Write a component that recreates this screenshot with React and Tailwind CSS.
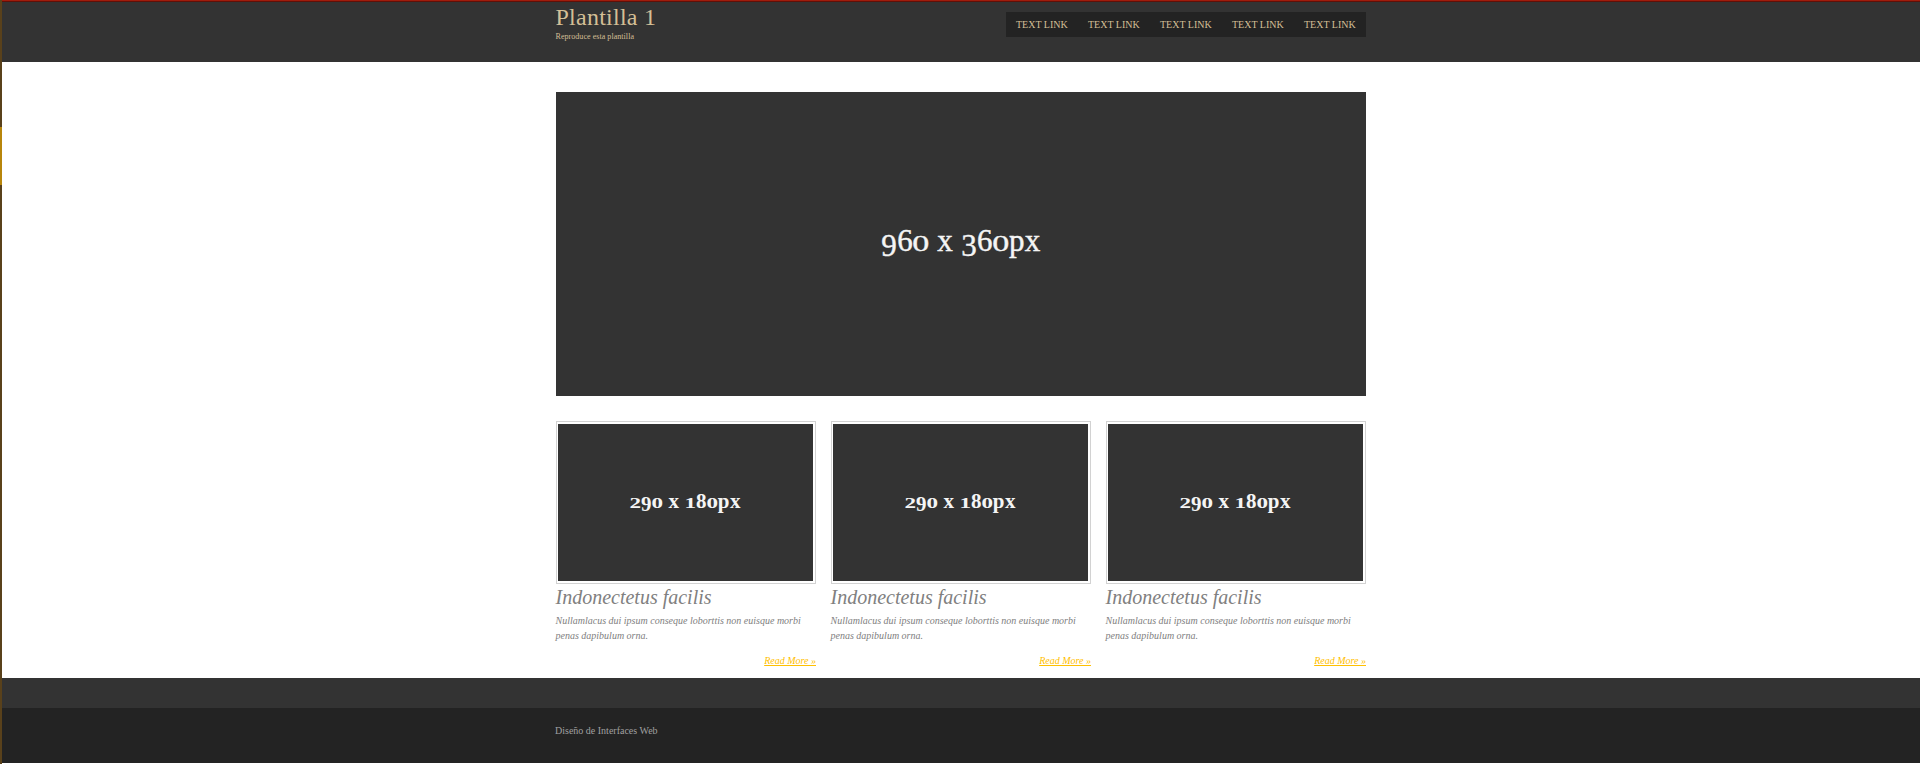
const cards = [1, 2, 3];
const links = [1, 2, 3, 4, 5];

// Old-style figures: short ones sit at x-height, low ones hang under the baseline.
function Figures({ text }) {
  return [...text].map((c, i) => {
    if ("012".includes(c)) {
      return <span key={i} className="inline-block origin-[50%_84%] scale-x-[1.1] scale-y-[0.73]">{c}</span>;
    }
    if ("39".includes(c)) {
      return <span key={i} className="align-[-0.15em] leading-[0]">{c}</span>;
    }
    return c;
  });
}

function Card() {
  return (
    <article className="w-[260px] whitespace-nowrap font-['Liberation_Serif',serif] italic text-[#808080]">
      <div className="h-[163px] border border-[#d2d2d2] pt-[2px] pl-px">
        <div className="flex h-[157px] w-[255px] items-center justify-center bg-[#333333] pb-[3px] text-[21px] leading-none font-bold tracking-[0.4px] not-italic text-[#f5f5f5]">
          <div className="whitespace-pre"><Figures text="290 x 180px" /></div>
        </div>
      </div>
      <h2 className="-ml-[0.5px] h-[29px] text-[20px] leading-[26px]">Indonectetus facilis</h2>
      <p className="-ml-[0.5px] h-[43px] text-[10px] leading-[15px]">
        Nullamlacus dui ipsum conseque loborttis non euisque morbi
        <br />
        penas dapibulum orna.
      </p>
      <p className="flex h-[20px] justify-end text-[10px] leading-[10px] text-[#ffc000]">
        <a href="#" className="underline">Read More »</a>
      </p>
    </article>
  );
}

export default function App() {
  return (
    <div className="flex h-[764px] w-full overflow-hidden bg-white font-['Liberation_Serif',serif]">
      <div className="w-[2px] shrink-0 bg-[#59411b] pt-[127px]">
        <div className="h-[58px] bg-[#b8860b]" />
      </div>
      <div className="min-w-0 grow">
        <header className="h-[62px] border-t border-[#a01c0c] bg-[#333333]">
          <div className="h-px bg-[#601008]" />
          <div className="ml-[554px] flex h-[60px] w-[810px] justify-between text-[#d3bf96]">
            <div className="-ml-[0.5px]">
              <h1 className="pt-px text-[24px] leading-[28px] tracking-[0.25px]">Plantilla 1</h1>
              <p className="pt-px text-[8px] leading-[10px] tracking-[0.05px]">Reproduce esta plantilla</p>
            </div>
            <nav className="mt-[10px] flex h-[25px] bg-[#232323] text-[10px] leading-[25px]">
              {links.map((n) => (
                <a key={n} href="#" className="w-[72px] pl-[10px]">TEXT LINK</a>
              ))}
            </nav>
          </div>
        </header>
        <main className="ml-[554px] h-[616px] w-[810px] pt-[30px]">
          <div className="mb-[25px] flex h-[304px] items-center justify-center bg-[#333333] pb-[7px] text-[31px] leading-none tracking-[0.4px] text-[#f5f5f5] [-webkit-text-stroke:0.4px_#f5f5f5]">
            <div className="whitespace-pre"><Figures text="960 x 360px" /></div>
          </div>
          <div className="flex gap-[15px]">
            {cards.map((n) => (
              <Card key={n} />
            ))}
          </div>
        </main>
        <div className="h-[30px] bg-[#333333]" />
        <footer className="h-[55px] bg-[#232323] pt-[15px] pl-[553px] text-[10px] leading-[15px] text-[#a0a0a0]">
          Diseño de Interfaces Web
        </footer>
      </div>
    </div>
  );
}
